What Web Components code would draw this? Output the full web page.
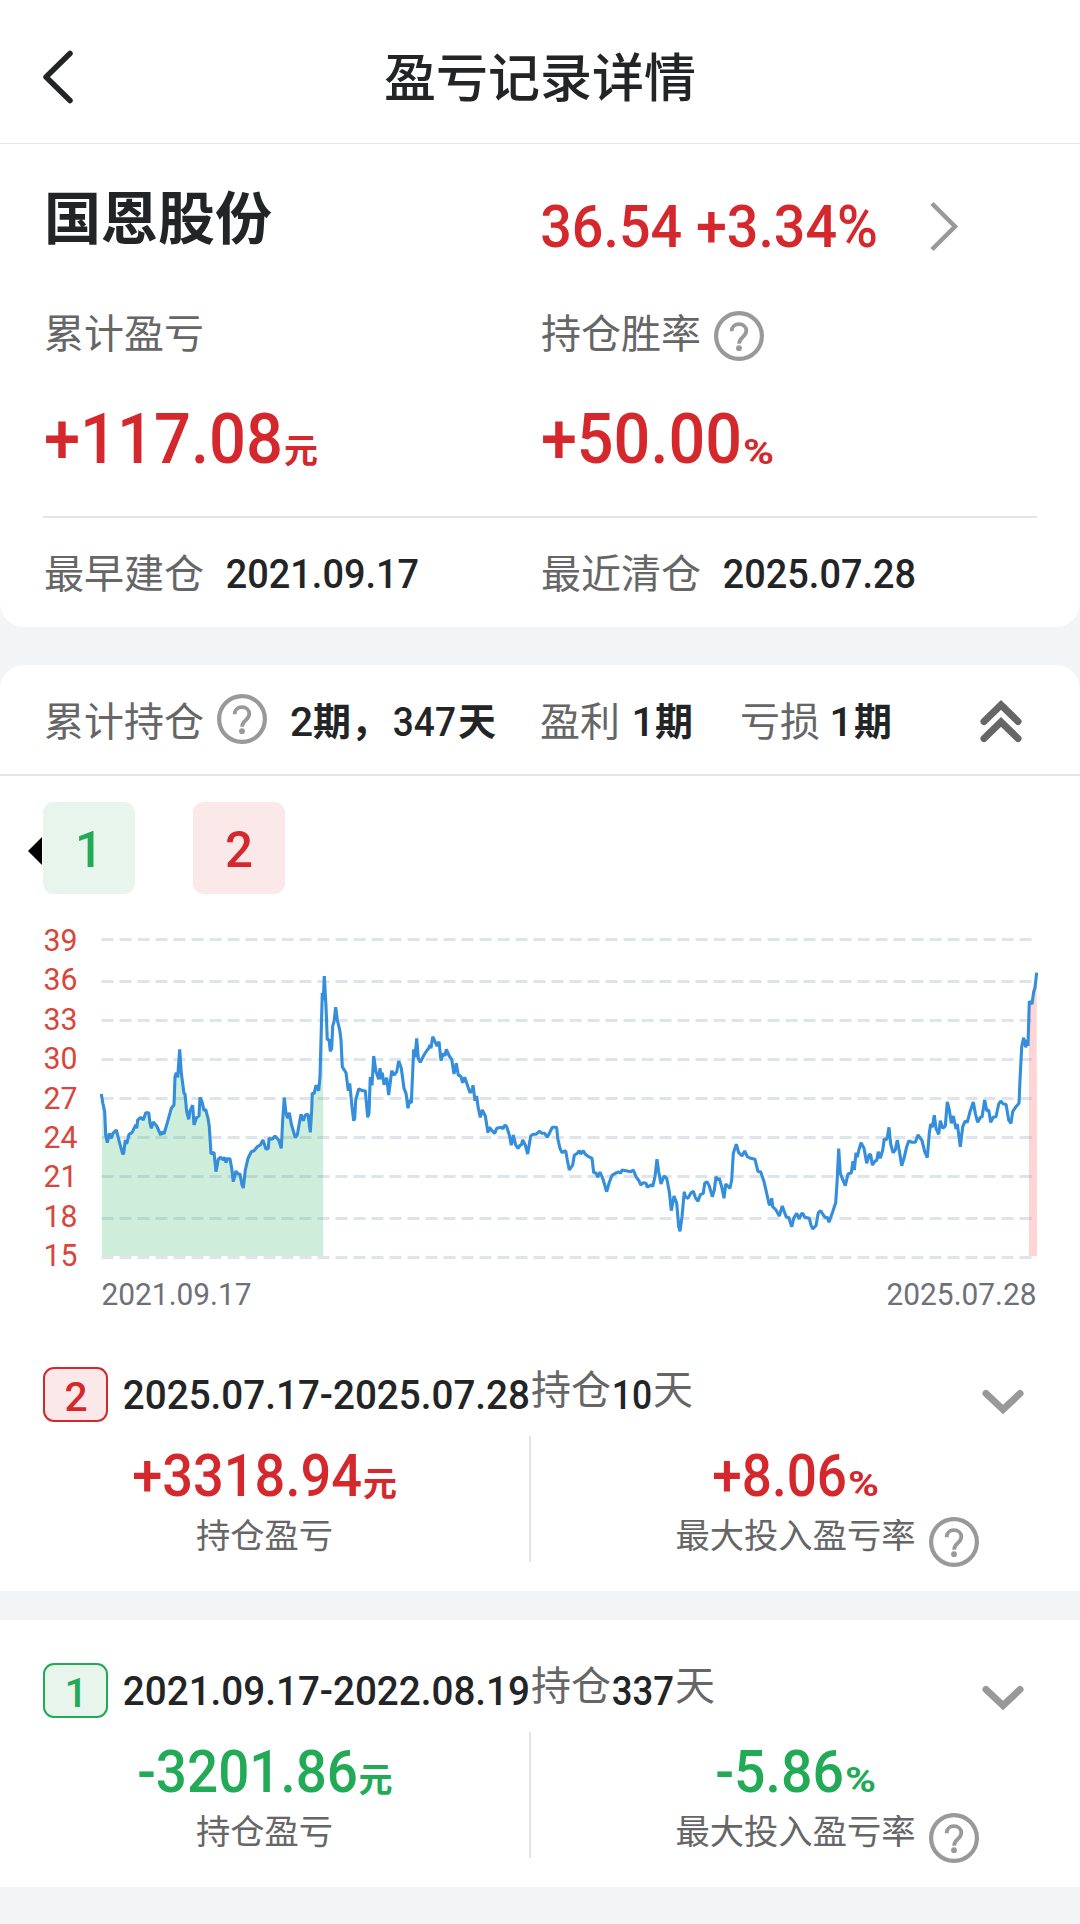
<!DOCTYPE html>
<html lang="zh-CN">
<head>
<meta charset="utf-8">
<title>盈亏记录详情</title>
<style>
  :root {
    --ink: #222426;
    --muted: #666;
    --faint: #999;
    --up: #d4282d;
    --up-soft: #fbe9e9;
    --down: #22aa57;
    --down-soft: #e8f5ec;
    --line: #e4e4e4;
    --gap: #f3f4f6;
  }
  body {
    margin: 0;
    background: var(--gap);
    color: var(--ink);
    font-family: "Noto Sans CJK SC", sans-serif;
  }
</style>
</head>
<body>
<pnl-page></pnl-page>

<script>
const define = (name, html, setup) => {
  const tpl = document.createElement("template");
  tpl.innerHTML = html;
  customElements.define(name, class extends HTMLElement {
    constructor() {
      super();
      this.attachShadow({ mode: "open" }).append(tpl.content.cloneNode(true));
    }
    connectedCallback() { if (setup) setup(this, this.shadowRoot); }
  });
};

// num-text: digits fitted to a box. Attributes: value, w (width), cap (digit height), weight.
// The host's bottom edge is the baseline.
class NumText extends HTMLElement {
  connectedCallback() {
    if (this.shadowRoot) return;
    const value = this.getAttribute("value");
    const w = +this.getAttribute("w");
    const cap = +this.getAttribute("cap");
    const size = cap / 0.711;
    const side = size * 0.03;
    const fit = value.length > 1 || value === "%"
      ? `x="${-side}" textLength="${w + side}" lengthAdjust="spacingAndGlyphs"`
      : `x="${w / 2}" text-anchor="middle"`;
    this.attachShadow({ mode: "open" }).innerHTML = `
      <style>
        :host { display: inline-block; flex: none; }
        svg { display: block; overflow: visible; }
        text { font-family: Roboto, sans-serif; fill: currentColor; }
      </style>
      <svg width="${w}" height="${cap}"><text ${fit} y="${cap}" font-size="${size}"
        font-weight="${this.getAttribute("weight") || 500}">${value}</text></svg>`;
  }
}
customElements.define("num-text", NumText);

define("help-icon", `
  <style>
    :host { display: block; width: 50px; height: 50px; flex: none; color: var(--faint); }
    svg { display: block; }
  </style>
  <svg width="50" height="50" fill="none" stroke="currentColor">
    <circle cx="25" cy="25" r="22.9" stroke-width="4.2"/>
    <path d="M17.7 20.2c0-4.2 3.1-7 7.3-7s7.3 2.8 7.3 6.6c0 3-1.6 4.6-3.8 6.6-2.2 2-3.4 3.2-3.4 6.3" stroke-width="3.8"/>
    <circle cx="25" cy="37.2" r="2.9" fill="currentColor" stroke="none"/>
  </svg>
`);

define("nav-header", `
  <style>
    :host {
      display: grid;
      grid-template-columns: 120px 1fr 120px;
      align-items: center;
      box-sizing: border-box;
      height: 144px;
      padding-top: 10px;
      border-bottom: 1px solid #e6e6e6;
      background: #fff;
    }
    svg { display: block; margin-left: 41px; }
    h1 { margin: 0 0 4px; font-size: 52px; line-height: 60px; font-weight: 500; text-align: center; }
  </style>
  <svg width="36" height="56" fill="none" stroke="currentColor" stroke-width="5.500" stroke-linecap="round" stroke-linejoin="round">
    <path d="M29 4.500 5 28l24 23.500"/>
  </svg>
  <h1><slot></slot></h1>
`);

define("stock-summary", `
  <style>
    :host { display: block; box-sizing: border-box; height: 483px; padding: 27px 43px 0; background: #fff; border-radius: 0 0 24px 24px; }
    .row { display: grid; grid-template-columns: 497px 1fr; padding-left: 1px; }
    .row > div { display: flex; align-items: center; }
    .title { height: 90px; }
    .title .price { color: var(--up); padding: 20px 0 0 1px; }
    h2 { margin: 0 0 4px; font-size: 57px; line-height: 66px; font-weight: 700; }
    .chevron { margin-left: 50px; color: var(--faint); }
    .labels { height: 74px; margin-top: 33px; }
    .label { font-size: 40px; line-height: 48px; color: var(--muted); }
    help-icon { margin: 10px 0 0 13px; }
    .totals { box-sizing: border-box; height: 62px; margin-top: 35px; padding-top: 10px; align-items: start; color: var(--up); }
    .row.totals > div { align-items: baseline; padding-left: 2px; }
    .unit { font-size: 34px; line-height: 34px; font-weight: 700; margin-left: 1px; }
    .dates { height: 106px; margin-top: 51px; border-top: 2px solid var(--line); }
    .dates num-text { margin: 5px 0 0 23px; color: var(--ink); }
  </style>
  <div class="row title">
    <div><h2>国恩股份</h2></div>
    <div class="price">
      <num-text value="36.54 +3.34%" w="336" cap="42"></num-text>
      <svg class="chevron" width="32" height="52" fill="none" stroke="currentColor" stroke-width="4.500"><path d="M4 3.500 27 26.500 4 49.500"/></svg>
    </div>
  </div>
  <div class="row labels">
    <div class="label">累计盈亏</div>
    <div class="label">持仓胜率<help-icon></help-icon></div>
  </div>
  <div class="row totals">
    <div><num-text value="+117.08" w="237" cap="50"></num-text><span class="unit">元</span></div>
    <div><num-text value="+50.00" w="199" cap="50"></num-text><num-text value="%" w="30" cap="24.5" weight="700" style="margin-left:2px"></num-text></div>
  </div>
  <div class="row dates">
    <div class="label">最早建仓<num-text value="2021.09.17" w="192" cap="29"></num-text></div>
    <div class="label">最近清仓<num-text value="2025.07.28" w="192" cap="29"></num-text></div>
  </div>
`);

define("holding-bar", `
  <style>
    :host {
      display: flex;
      align-items: center;
      box-sizing: border-box;
      height: 111px;
      padding: 0 58px 2px 44px;
      border-bottom: 2px solid var(--line);
      white-space: nowrap;
    }
    .label { font-size: 40px; line-height: 48px; color: var(--muted); }
    b { font-size: 38px; line-height: 48px; font-weight: 700; }
    num-text { margin-top: 5px; }
    help-icon { margin: 0 23px 0 13px; }
    .fold { margin: 5px 0 0 auto; color: var(--muted); }
  </style>
  <span class="label">累计持仓</span><help-icon></help-icon>
  <num-text value="2" w="23" cap="29"></num-text><b>期，</b>
  <num-text value="347" w="62" cap="29" style="margin-left:5px"></num-text><b style="margin-left:2px">天</b>
  <span class="label" style="margin-left:44px">盈利</span>
  <num-text value="1" w="12" cap="29" style="margin-left:17px"></num-text><b style="margin-left:6px">期</b>
  <span class="label" style="margin-left:47px">亏损</span>
  <num-text value="1" w="12" cap="29" style="margin-left:15px"></num-text><b style="margin-left:7px">期</b>
  <svg class="fold" width="42" height="44" fill="none" stroke="currentColor" stroke-width="7" stroke-linecap="round">
    <path d="M4 22.500 21 6l17 16.500M4 39.500 21 23l17 16.500"/>
  </svg>
`);

define("period-tabs", `
  <style>
    :host { display: flex; align-items: center; height: 92px; padding: 26px 28px 0; }
    .arrow { border: 14px solid transparent; border-left: 0; border-right-color: #000; margin: 6px 1px 0 0; }
    .tab { display: grid; place-items: center; width: 92px; height: 92px; border-radius: 11px; }
    .tab + .tab { margin-left: 58px; }
    .down { color: var(--down); background: var(--down-soft); }
    .up { color: var(--up); background: var(--up-soft); }
    num-text { margin-top: 3px; }
  </style>
  <span class="arrow"></span>
  <div class="tab down"><num-text value="1" w="20" cap="35"></num-text></div>
  <div class="tab up"><num-text value="2" w="20" cap="35"></num-text></div>
`);

// Price series in thirds of a pixel, each part relative to its own origin.
const SERIES = [
  [80, 26, "64,522 69,552 74,575 77,645 82,668 88,640 94,655 99,640 109,630 118,665 128,702 131,700 136,660 140,672 147,643 156,638 167,615 170,625 173,600 182,592 190,600 197,578 206,578 210,610 214,625 220,606 230,618 242,645 246,635 252,642 262,608 274,565 282,555 285,470 289,458 293,472 299,388 304,460 312,520 315,522 320,575 326,598 330,572 338,556 342,615 350,592 357,588 360,532 366,545 372,572 377,568 384,595 388,620 393,702 402,697 408,755 415,718 422,712 430,720 434,712 438,728 442,716 450,716 455,745 460,785 468,753 474,762 480,762 486,795 490,804 496,750 504,715 514,695 522,692 532,680 541,675 549,660 558,688 565,685 567,655 577,658 585,648 596,660 604,685 608,600 613,533 618,580 623,595 628,578 634,612 646,653 652,645 658,610 663,583 670,602 676,585 684,583 691,637 695,570 697,518 702,522 708,496 716,512 720,470 723,360 727,218 730,240 733,168"],
  [300, 26, "78,260 82,360 87,358 91,394 95,385 98,318 102,305 107,262 112,300 119,330 123,360 127,440 138,458 145,512 149,490 156,560 161,602 164,595 167,540 176,507 188,512 196,512 203,592 207,580 211,470 216,496 221,408 228,455 236,478 240,445 244,478 247,458 252,494 260,473 266,525 275,452 282,465 290,455 296,423 304,445 312,505 318,520 324,565 329,540 334,550 341,388 345,412 350,355 355,415 361,427 372,405 380,392 386,385 390,375 393,385 398,350 405,365 411,378 417,365 423,422 430,400 435,408 439,388 448,408 455,418 462,462 469,430 475,466 482,468 488,488 494,472 503,498 510,518 516,512 519,496 525,542 530,528 534,560 541,592 547,570 556,588 564,638 568,622 576,632 584,640 590,625 605,622 609,627 614,615 620,620 628,645 634,676 640,645 647,675 654,685 661,675 664,676 668,660 676,675 683,702 692,648 700,643 708,643 718,634 726,640 734,640 742,652 750,636 757,622 768,622"],
  [540, 126, "50,323 53,355 60,385 66,398 77,392 82,420 88,450 98,435 103,406 112,400 118,392 122,402 130,392 136,403 146,410 156,415 161,458 168,458 173,472 180,456 188,475 200,515 207,490 216,466 226,460 236,456 242,460 246,450 258,452 272,455 280,450 288,470 297,482 302,495 310,488 318,490 322,502 334,494 338,500 345,470 351,418 356,455 363,492 372,468 380,475 388,515 394,572 402,528 410,550 416,620 420,634 426,590 433,515 436,530 444,535 452,520 460,514 466,532 474,544 481,524 490,520 494,490 501,485 508,498 517,530 523,510 528,470 534,480 538,475 545,500 552,535 557,492 563,498 570,505 575,480 580,400 589,373 596,398 606,408 614,393 622,410 632,415 645,418 654,455 662,455 672,485 680,520 687,552 691,555 695,535 698,560 708,570 718,588 727,558 739,592 746,592 755,620"],
  [790, 26, "11,895 20,880 28,897 34,882 38,880 44,892 58,895 63,915 68,927 78,917 85,878 92,872 100,885 106,893 112,892 117,907 128,875 137,848 141,790 146,686 151,760 158,778 166,797 174,762 184,758 189,724 193,750 198,698 202,712 206,692 213,668 222,685 230,730 238,703 242,705 247,735 256,722 260,722 265,695 271,715 278,690 283,656 288,660 292,652 297,622 302,672 309,698 316,690 322,660 329,700 335,737 342,715 350,680 356,663 366,667 376,667 384,645 388,650 396,662 404,695 412,713 418,640 422,612 427,622 433,586 438,625 446,643 451,602 458,625 466,618 472,546 478,570 484,610 490,588 498,627 502,612 511,680 518,620 526,603 532,607 540,575 550,546 556,580 563,607 572,590 576,592 584,540 590,572 596,570 602,607 610,592 618,590 626,552 632,543 640,552 648,553 656,600 663,610 668,575 678,560 687,550 690,480 695,380 701,353 707,382 712,360 714,378 718,244 726,252 731,215 735,203 740,158"],
];
const GRID = [45.5, 87.5, 126.5, 165.5, 204.5, 243.5, 282.5, 324.5, 363.5];

define("price-chart", `
  <style>
    :host { display: block; height: 430px; }
    svg { display: block; font-family: Roboto, sans-serif; }
    .grid { stroke: #dfe4ec; stroke-width: 3; stroke-dasharray: 12 6; }
    .axis { fill: #d9453a; font-size: 30.5px; }
    .date { fill: #6e7079; font-size: 30.5px; }
    .price { fill: none; stroke: #348edb; stroke-width: 3.1; stroke-linejoin: bevel; }
  </style>
  <svg width="1080" height="430"></svg>
`, (host, root) => {
  const points = SERIES.flatMap(([ox, oy, part]) => part.split(" ").map((p) => {
    const [x, y] = p.split(",");
    return [+(ox + x / 3).toFixed(1), +(oy + y / 3).toFixed(1)];
  }));
  const area = (from, to, fill) => {
    const inside = points.filter(([x]) => x >= from - 1 && x <= to + 0.5)
      .map(([x, y]) => [Math.min(Math.max(x, from), to), y]);
    return `<polygon fill="${fill}" points="${from},362 ${inside.join(" ")} ${to},362"/>`;
  };
  const grid = GRID.map((y) => `<path class="grid" d="M101.500 ${y}H1031.500"/>`).join("");
  const axis = GRID.map((_, i) =>
    `<text class="axis" x="43.500" y="${57 + i * 39.4}" textLength="34" lengthAdjust="spacingAndGlyphs">${39 - i * 3}</text>`).join("");
  root.querySelector("svg").innerHTML = grid
    + area(102, 323, "rgba(34,176,90,.22)") + area(1029, 1037, "rgba(250,60,60,.22)")
    + `<polyline class="price" points="${points.join(" ")}"/>` + axis
    + `<text class="date" x="101.500" y="411" textLength="150" lengthAdjust="spacingAndGlyphs">2021.09.17</text>`
    + `<text class="date" x="886.500" y="411" textLength="150" lengthAdjust="spacingAndGlyphs">2025.07.28</text>`;
});

// period-record: one holding period. Attribute trend ("up" | "down");
// slots: no, range, days, profit, rate.
define("period-record", `
  <style>
    :host { display: block; box-sizing: border-box; height: 267px; padding: 43px 0 0 43px; background: #fff; --tone: var(--up); --soft: var(--up-soft); }
    :host([trend="down"]) { --tone: var(--down); --soft: var(--down-soft); }
    .head { display: flex; align-items: center; height: 55px; padding-right: 56px; }
    .no {
      display: grid;
      place-items: center;
      box-sizing: border-box;
      width: 65px;
      height: 55px;
      margin-right: 16px;
      padding-top: 3px;
      border: 2px solid var(--tone);
      border-radius: 11px;
      color: var(--tone);
      background: var(--soft);
    }
    .word { font-size: 40px; line-height: 46px; color: var(--muted); margin: 0 2px 15px 1px; }
    .chevron { margin: 15px 0 0 auto; color: var(--faint); }
    .stats { display: grid; grid-template-columns: 486px 2px 529px; height: 126px; margin-top: 14px; }
    .stats > i { background: var(--line); }
    .stat { display: flex; flex-direction: column; align-items: center; padding-top: 18px; }
    .stat:first-child { margin-left: -43px; }
    .value { display: flex; align-items: baseline; height: 44px; margin-left: 2px; color: var(--tone); font-size: 34px; line-height: 34px; font-weight: 700; }
    .label { display: flex; margin-top: 17px; height: 36px; font-size: 34.3px; line-height: 36px; color: var(--muted); }
    .label help-icon { margin: 2px -63px 0 13px; }
  </style>
  <div class="head">
    <div class="no"><slot name="no"></slot></div>
    <slot name="range"></slot><span class="word">持仓</span><slot name="days"></slot><span class="word">天</span>
    <svg class="chevron" width="42" height="26" fill="none" stroke="currentColor" stroke-width="7" stroke-linecap="round"><path d="M4 4.500 21 20.500 38 4.500"/></svg>
  </div>
  <div class="stats">
    <div class="stat">
      <div class="value"><slot name="profit"></slot><span style="margin-left:1px">元</span></div>
      <div class="label">持仓盈亏</div>
    </div>
    <i></i>
    <div class="stat">
      <div class="value"><slot name="rate"></slot><num-text value="%" w="30" cap="25" weight="700" style="margin-left:2px"></num-text></div>
      <div class="label">最大投入盈亏率<help-icon></help-icon></div>
    </div>
  </div>
`);

define("pnl-page", `
  <style>
    :host { display: block; width: 1080px; height: 1924px; overflow: hidden; }
    .card { margin-top: 38px; background: #fff; border-radius: 24px 24px 0 0; }
    .card + period-record { margin-top: 29px; }
  </style>
  <nav-header>盈亏记录详情</nav-header>
  <stock-summary></stock-summary>
  <section class="card">
    <holding-bar></holding-bar>
    <period-tabs></period-tabs>
    <price-chart></price-chart>
    <period-record trend="up">
      <num-text slot="no" value="2" w="18" cap="29"></num-text>
      <num-text slot="range" value="2025.07.17-2025.07.28" w="406" cap="29"></num-text>
      <num-text slot="days" value="10" w="39" cap="29"></num-text>
      <num-text slot="profit" value="+3318.94" w="228" cap="42"></num-text>
      <num-text slot="rate" value="+8.06" w="133" cap="42"></num-text>
    </period-record>
  </section>
  <period-record trend="down">
    <num-text slot="no" value="1" w="18" cap="29"></num-text>
    <num-text slot="range" value="2021.09.17-2022.08.19" w="406" cap="29"></num-text>
    <num-text slot="days" value="337" w="61" cap="29"></num-text>
    <num-text slot="profit" value="-3201.86" w="219" cap="42"></num-text>
    <num-text slot="rate" value="-5.86" w="127" cap="42"></num-text>
  </period-record>
`);
</script>
</body>
</html>
